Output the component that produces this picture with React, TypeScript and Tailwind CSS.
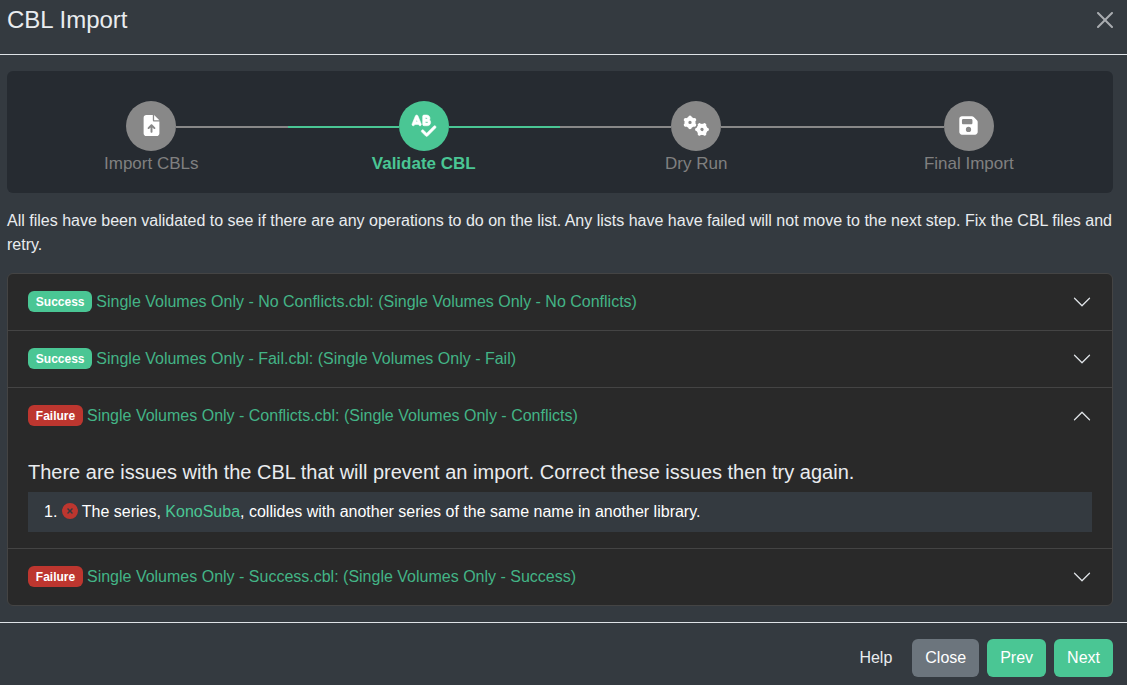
import type { ReactNode } from 'react';
import { FaCircleXmark, FaFileArrowUp, FaFloppyDisk, FaSpellCheck } from 'react-icons/fa6';

interface Step {
  title: string;
  icon: ReactNode;
  active?: boolean;
  left: string;
  right: string;
}

function Gear({ x, y, turn }: { x: number; y: number; turn: number }) {
  return (
    <g transform={`translate(${x} ${y}) rotate(${turn})`} fill="none" stroke="currentColor">
      <circle r="3.6" strokeWidth="3.9" />
      <path
        d="M0-4.6V-5.2M3.98-2.3 4.5-2.6M3.98 2.3 4.5 2.6M0 4.6V5.2M-3.98 2.3-4.5 2.6M-3.98-2.3-4.5-2.6"
        strokeWidth="3.5"
        strokeLinecap="round"
        strokeLinejoin="round"
      />
    </g>
  );
}

function Gears() {
  return (
    <svg viewBox="0 0 26 22" className="h-[22px] w-[26px]">
      <Gear x={7} y={7.4} turn={0} />
      <Gear x={19} y={14.4} turn={30} />
    </svg>
  );
}

const steps: Step[] = [
  {
    title: 'Import CBLs',
    icon: <FaFileArrowUp className="mb-px h-[21px] w-auto" />,
    left: 'bg-transparent',
    right: 'bg-[#888888]',
  },
  {
    title: 'Validate CBL',
    icon: (
      <FaSpellCheck
        className="mb-px h-[21.5px] w-[24px] overflow-visible"
        preserveAspectRatio="none"
        strokeWidth={13}
        stroke="currentColor"
      />
    ),
    active: true,
    left: 'bg-[#4ac694]',
    right: 'bg-[#4ac694]',
  },
  { title: 'Dry Run', icon: <Gears />, left: 'bg-[#888888]', right: 'bg-[#888888]' },
  {
    title: 'Final Import',
    icon: <FaFloppyDisk className="mb-px h-[21px] w-auto" />,
    left: 'bg-[#888888]',
    right: 'bg-transparent',
  },
];

function StepItem({ step }: { step: Step }) {
  return (
    <div className="flex flex-1 flex-col items-center">
      <div className="flex w-full items-center">
        <div className={`mt-[2px] h-[2px] flex-1 ${step.left}`} />
        <div
          className={`flex size-[50px] items-center justify-center rounded-full text-white ${
            step.active ? 'bg-[#4ac694]' : 'bg-[#888888]'
          }`}
        >
          {step.icon}
        </div>
        <div className={`mt-[2px] h-[2px] flex-1 ${step.right}`} />
      </div>
      <div
        className={`text-[17px] leading-[25px] ${step.active ? 'font-bold text-[#4ac694]' : 'text-[#808080]'}`}
      >
        {step.title}
      </div>
    </div>
  );
}

function Chevron({ up }: { up?: boolean }) {
  return (
    <svg viewBox="0 0 16 16" className={`size-5 shrink-0 ${up ? 'rotate-180' : ''}`} fill="#dee2e6">
      <path
        fillRule="evenodd"
        d="M1.646 4.646a.5.5 0 0 1 .708 0L8 10.293l5.646-5.647a.5.5 0 0 1 .708.708l-6 6a.5.5 0 0 1-.708 0l-6-6a.5.5 0 0 1 0-.708z"
      />
    </svg>
  );
}

interface ItemProps {
  success?: boolean;
  title: string;
  children?: ReactNode;
}

function AccordionItem({ success, title, children }: ItemProps) {
  return (
    <div className="border-b border-[#444444] last:border-b-0">
      <button className="flex h-14 w-full items-center justify-between px-5 text-left">
        <span className="flex items-center gap-1">
          <span
            className={`mb-[2px] flex h-[21px] items-center rounded-md px-[7.8px] pt-[2px] text-xs font-bold text-white ${
              success ? 'bg-[#4ac694]' : 'bg-[#bd362f]'
            }`}
          >
            {success ? 'Success' : 'Failure'}
          </span>
          <span className="text-base leading-6 text-[#43b486]">{title}</span>
        </span>
        <Chevron up={!!children} />
      </button>
      {children && <div className="px-5 py-4">{children}</div>}
    </div>
  );
}

export default function App() {
  return (
    <div className="flex h-[685px] w-full flex-col overflow-hidden bg-[#343a40] font-['Liberation_Sans',Arial,sans-serif] text-base text-[#e9ecef]">
      <header className="flex h-[55px] items-start justify-between border-b border-[#dee2e6] pr-[14px] pl-[7px]">
        <h4 className="pt-[2px] text-2xl leading-9">CBL Import</h4>
        <button className="mt-3" aria-label="Close dialog">
          <svg viewBox="0 0 16 16" className="size-4" fill="#a9acb0">
            <path d="M.293.293a1 1 0 0 1 1.414 0L8 6.586 14.293.293a1 1 0 1 1 1.414 1.414L9.414 8l6.293 6.293a1 1 0 0 1-1.414 1.414L8 9.414l-6.293 6.293a1 1 0 0 1-1.414-1.414L6.586 8 .293 1.707a1 1 0 0 1 0-1.414z" />
          </svg>
        </button>
      </header>

      <main className="flex flex-1 flex-col pt-4 pr-[14px] pl-[7px]">
        <div className="flex h-[122px] rounded-md bg-[#262b31] px-2 pt-[30px]">
          {steps.map((step) => (
            <StepItem key={step.title} step={step} />
          ))}
        </div>

        <p className="mt-4 leading-6">
          All files have been validated to see if there are any operations to do on the list. Any lists have have
          failed will not move to the next step. Fix the CBL files and retry.
        </p>

        <div className="mt-4 overflow-hidden rounded-md border border-[#444444] bg-[#292929]">
          <AccordionItem
            success
            title="Single Volumes Only - No Conflicts.cbl: (Single Volumes Only - No Conflicts)"
          />
          <AccordionItem success title="Single Volumes Only - Fail.cbl: (Single Volumes Only - Fail)" />
          <AccordionItem title="Single Volumes Only - Conflicts.cbl: (Single Volumes Only - Conflicts)">
            <h5 className="mb-2 text-xl leading-6">
              There are issues with the CBL that will prevent an import. Correct these issues then try again.
            </h5>
            <div className="flex h-10 items-center bg-[#343a40] px-4 text-white">
              <span>1.</span>
              <FaCircleXmark className="mr-1 mb-[2px] ml-[4.4px] size-4 text-[#bd362f]" />
              <span>
                The series, <span className="text-[#4ac694]">KonoSuba</span>, collides with another series of the
                same name in another library.
              </span>
            </div>
          </AccordionItem>
          <AccordionItem title="Single Volumes Only - Success.cbl: (Single Volumes Only - Success)" />
        </div>
      </main>

      <footer className="flex h-[63px] items-start justify-end gap-2 border-t border-[#dee2e6] pt-4 pr-[14px]">
        <button className="h-[38px] px-3 leading-6">Help</button>
        <button className="h-[38px] rounded-md bg-[#6c757d] px-[13px] leading-6 text-white">Close</button>
        <button className="h-[38px] rounded-md bg-[#4ac694] px-[13px] leading-6 text-white">Prev</button>
        <button className="h-[38px] rounded-md bg-[#4ac694] px-[13px] leading-6 text-white">Next</button>
      </footer>
    </div>
  );
}
